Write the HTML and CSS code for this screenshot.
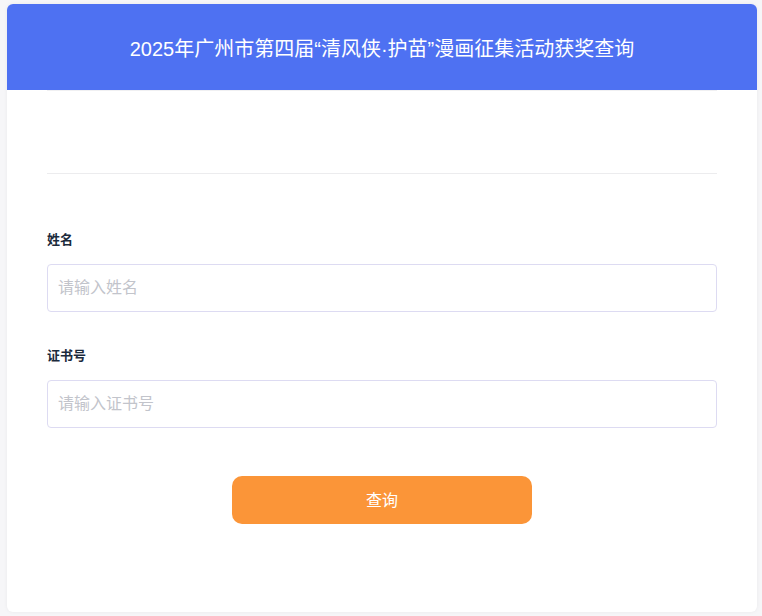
FILE: index.html
```html
<!DOCTYPE html>
<html lang="zh-CN">
<head>
<meta charset="utf-8">
<title>获奖查询</title>
<link rel="stylesheet" href="styles.css">
</head>
<body>
<div class="card">
  <div class="header">
    <h1 class="title">2025年广州市第四届“清风侠·护苗”漫画征集活动获奖查询</h1>
  </div>
  <div class="content">
    <div class="notice"></div>
    <form class="form">
      <div class="form-item">
        <label class="label">姓名</label>
        <input class="input" type="text" placeholder="请输入姓名">
      </div>
      <div class="form-item">
        <label class="label">证书号</label>
        <input class="input" type="text" placeholder="请输入证书号">
      </div>
      <div class="actions">
        <button class="btn" type="button">查询</button>
      </div>
    </form>
  </div>
</div>
</body>
</html>
```

FILE: styles.css
```css
* { box-sizing: border-box; }
html, body { margin: 0; height: 100%; }
body {
  background: #f6f6f8;
  padding: 4px 5px 4px 7px;
  font-family: "Liberation Sans", "Noto Sans CJK SC", sans-serif;
}
.card {
  height: 608px;
  background: #fff;
  border-radius: 6px;
  box-shadow: 0 0 4px rgba(0,0,0,0.05);
  overflow: hidden;
}
.header {
  height: 86px;
  background: #4e71f2;
  display: flex;
  align-items: center;
  justify-content: center;
}
.title {
  margin: 0;
  color: #fff;
  font-size: 20px;
  font-weight: normal;
  letter-spacing: 0;
}
.content {
  padding: 0 40px;
}
.notice {
  height: 84px;
  border-top: 1px solid #f0f0f2;
  border-bottom: 1px solid #ececee;
}
.form {
  padding-top: 56px;
}
.form-item {
  display: flex;
  flex-direction: column;
  gap: 14px;
  margin-bottom: 34px;
}
.label {
  font-size: 13px;
  font-weight: bold;
  line-height: 20px;
  color: #1b2a3c;
}
.input {
  height: 48px;
  border: 1px solid #dddbf2;
  border-radius: 4px;
  padding: 0 10px;
  font-size: 16px;
  font-family: inherit;
  color: #333;
  outline: none;
}
.input::placeholder { color: #c2c4cb; }
.actions {
  display: flex;
  justify-content: center;
  padding-top: 14px;
}
.btn {
  width: 300px;
  height: 48px;
  border: none;
  border-radius: 10px;
  background: #fb9538;
  color: #fff;
  font-size: 16px;
  font-family: inherit;
  padding-bottom: 3px;
}
```
